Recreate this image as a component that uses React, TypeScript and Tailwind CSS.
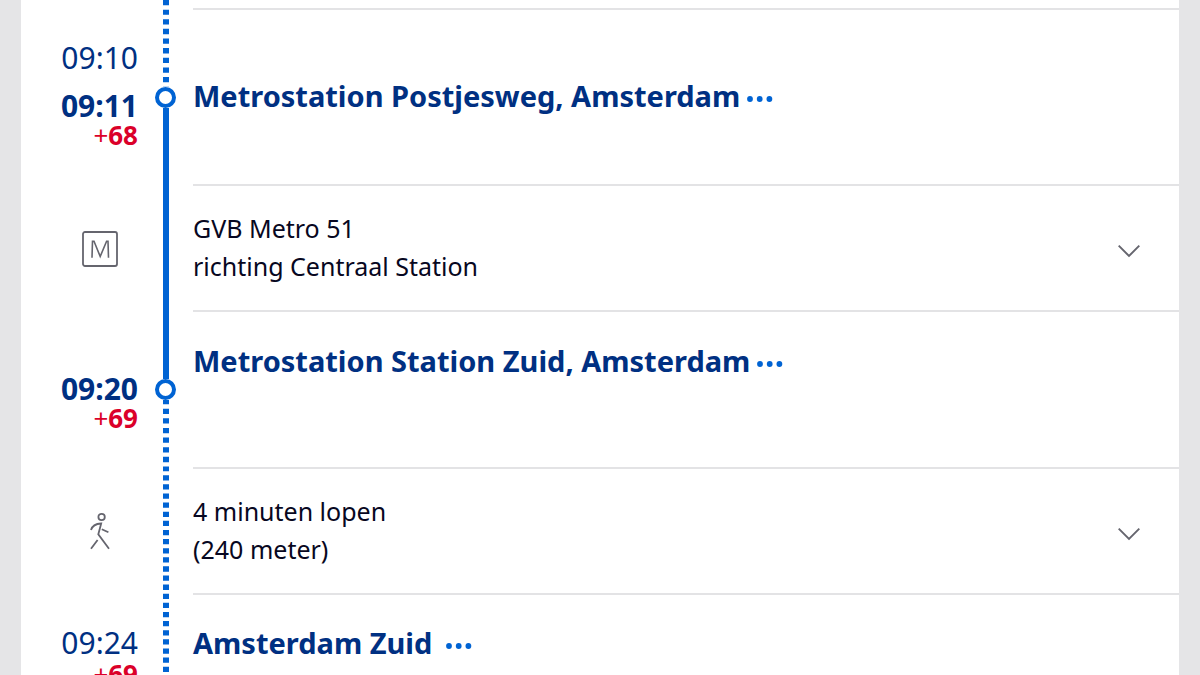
import type { ReactNode } from "react";

function Dashes({ offset = 0, gap = 4.34 }: { offset?: number; gap?: number }) {
  return (
    <div className="relative w-[6px] flex-1">
      <svg className="absolute inset-0 h-full w-full" aria-hidden="true">
        <line x1="3" y1="0" x2="3" y2="100%" stroke="#0063d3" strokeWidth="6" strokeDasharray={`5.3 ${gap}`} strokeDashoffset={offset} />
      </svg>
    </div>
  );
}

function Solid() {
  return <div className="w-[6px] flex-1 bg-[#0063d3]" />;
}

function Marker() {
  return <div className="size-[21px] shrink-0 rounded-full border-[4px] border-[#0063d3] bg-white" />;
}

function Row({ left, rail, children }: { left?: ReactNode; rail: ReactNode; children?: ReactNode }) {
  return (
    <li className="flex">
      <div className="w-[117px] shrink-0">{left}</div>
      <div className="flex w-[55px] shrink-0 flex-col items-center">{rail}</div>
      <div className="min-w-0 flex-1 border-b-2 border-[#e3e3e5]">{children}</div>
    </li>
  );
}

function Planned({ time }: { time: string }) {
  return <p className="text-right text-[30px] leading-[34px] text-[#003082]">{time}</p>;
}

function Actual({ time }: { time: string }) {
  return <p className="text-right text-[30px] leading-[30px] font-bold text-[#003082]">{time}</p>;
}

function Delay({ minutes }: { minutes: number }) {
  return (
    <p className="text-right text-[26px] leading-[28px] text-[#db0029]">
      +<b className="font-bold">{minutes}</b>
    </p>
  );
}

function StopName({ name, wide = false }: { name: string; wide?: boolean }) {
  return (
    <div className={wide ? "flex items-center gap-3.5" : "flex items-center gap-[7px]"}>
      <h2 className="text-[29px] leading-10 font-bold text-[#003082]">{name}</h2>
      <button type="button" aria-label={`Opties voor ${name}`} className="pt-[6px]">
        <svg className="block" width="26" height="6" viewBox="0 0 26 6" fill="#0063d3">
          <circle cx="3" cy="3" r="2.9" />
          <circle cx="12.7" cy="3" r="2.9" />
          <circle cx="22.4" cy="3" r="2.9" />
        </svg>
      </button>
    </div>
  );
}

function Leg({ title, detail }: { title: string; detail: string }) {
  return (
    <button type="button" aria-expanded="false" className="flex w-full items-center justify-between pt-[23px] pr-[38px] pb-[25px] text-left text-[25px] leading-[38px] text-[#070721]">
      <span>
        {title}
        <br />
        {detail}
      </span>
      <svg className="mt-2" width="24" height="14" viewBox="0 0 24 14" fill="none" stroke="#65656e" strokeWidth="1.9">
        <path d="M1.7 1.7 12 12 22.3 1.7" />
      </svg>
    </button>
  );
}

export default function App() {
  return (
    <div className="h-screen overflow-hidden bg-[#e5e5e7] px-[21px] font-['Noto_Sans','Open_Sans',sans-serif]">
      <main className="min-h-full bg-white">
        <ol>
          <Row rail={<Dashes />}>
            <div className="h-2" />
          </Row>
          <Row
            left={
              <div className="pt-[31px]">
                <Planned time="09:10" />
                <div className="pt-4">
                  <Actual time="09:11" />
                </div>
                <Delay minutes={68} />
              </div>
            }
            rail={
              <>
                <div className="flex h-[77px] flex-col">
                  <Dashes offset={0.45} />
                </div>
                <Marker />
                <Solid />
              </>
            }
          >
            <div className="h-[174px] pt-[66px]">
              <StopName name="Metrostation Postjesweg, Amsterdam" />
            </div>
          </Row>
          <Row
            left={
              <div className="flex justify-end pt-[44px] pr-[19px]">
                <svg width="38" height="38" viewBox="0 0 38 38" fill="none" stroke="#65656e" strokeWidth="1.8" role="img" aria-label="Metro">
                  <rect x="2" y="2" width="34" height="34" rx="2" />
                  <path d="M11 27.8 11.5 11.2H13L19.2 26.5 25.6 11.2H27L27.5 27.8" strokeWidth="1.6" />
                </svg>
              </div>
            }
            rail={<Solid />}
          >
            <Leg title="GVB Metro 51" detail="richting Centraal Station" />
          </Row>
          <Row
            left={
              <div className="pt-[62px]">
                <Actual time="09:20" />
                <Delay minutes={69} />
              </div>
            }
            rail={
              <>
                <div className="flex h-[67px] flex-col">
                  <Solid />
                </div>
                <Marker />
                <Dashes offset={1} />
              </>
            }
          >
            <div className="h-[155px] pt-[29px]">
              <StopName name="Metrostation Station Zuid, Amsterdam" />
            </div>
          </Row>
          <Row
            left={
              <div className="flex justify-end pt-[43px] pr-[27px]">
                <svg width="22" height="38" viewBox="0 0 22 38" fill="none" stroke="#65656e" strokeWidth="1.8" role="img" aria-label="Lopen">
                  <circle cx="12.6" cy="5" r="3.2" />
                  <path d="M2 18C3 14.5 6 11.8 12.2 11.5L9.3 22.3 20 36.8" />
                  <path d="M8.6 28 2 36.8M12.8 17.2 19.4 20.3" />
                </svg>
              </div>
            }
            rail={<Dashes offset={2.95} gap={3.82} />}
          >
            <Leg title="4 minuten lopen" detail="(240 meter)" />
          </Row>
          <Row
            left={
              <div className="pt-[31px]">
                <Planned time="09:24" />
                <Delay minutes={69} />
              </div>
            }
            rail={<Dashes offset={1.3} gap={3.82} />}
          >
            <div className="h-[174px] pt-[28px]">
              <StopName name="Amsterdam Zuid" wide />
            </div>
          </Row>
        </ol>
      </main>
    </div>
  );
}
